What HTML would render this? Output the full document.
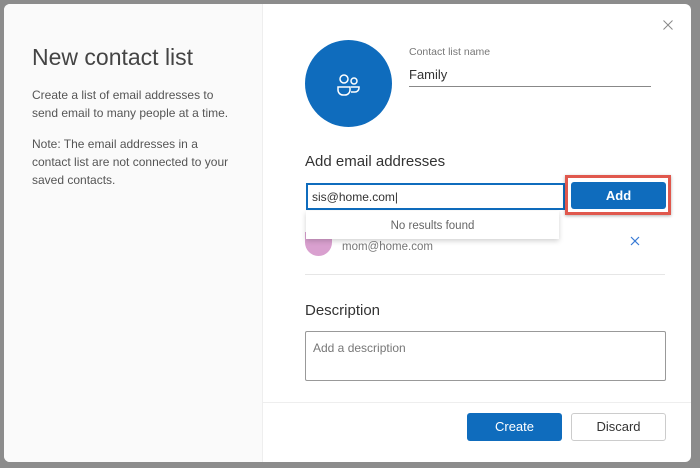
<!DOCTYPE html>
<html><head><style>
*{margin:0;padding:0;box-sizing:border-box}
body{width:700px;height:468px;background:#8c8c8c;font-family:"Liberation Sans",sans-serif;position:relative;overflow:hidden}
.dlg{position:absolute;left:4px;top:4px;width:687px;height:458px;background:#fff;border-radius:6px;overflow:hidden}
.left{position:absolute;left:0;top:0;width:259px;height:100%;background:#fafafa;border-right:1px solid #eee}
.a{position:absolute}
</style></head><body>
<div class="dlg">
<div class="left">
<div class="a" style="left:28px;top:40px;font-size:23px;color:#444;font-weight:300">New contact list</div>
<div class="a" style="left:28px;top:82px;font-size:12px;line-height:18px;color:#555;width:205px">Create a list of email addresses to<br>send email to many people at a time.</div>
<div class="a" style="left:28px;top:131px;font-size:12px;line-height:18px;color:#555;width:215px">Note: The email addresses in a<br>contact list are not connected to your<br>saved contacts.</div>
</div>
<svg class="a" style="left:659px;top:16px" width="10" height="10"><path d="M0.5 0.5L9.5 9.5M9.5 0.5L0.5 9.5" stroke="#888" stroke-width="1"/></svg>
<div class="a" style="left:301px;top:36px;width:87px;height:87px;border-radius:50%;background:#0f6cbd"></div>
<svg class="a" style="left:333px;top:70px" width="24" height="22" viewBox="0 0 24 22"><g fill="none" stroke="#fff" stroke-width="1.5"><circle cx="7" cy="5" r="4"/><circle cx="17" cy="7" r="3"/><path d="M1 13h12v3a5 5 0 0 1-5 5H6a5 5 0 0 1-5-5z"/><path d="M14 13h8v1a4 4 0 0 1-4 4h-4"/></g></svg>
<div class="a" style="left:405px;top:42px;font-size:10.5px;color:#777">Contact list name</div>
<div class="a" style="left:405px;top:63px;font-size:13px;color:#333">Family</div>
<div class="a" style="left:405px;top:82px;width:242px;border-top:1px solid #888"></div>
<div class="a" style="left:301px;top:149px;font-size:15px;color:#333">Add email addresses</div>
<div class="a" style="left:302px;top:179px;width:259px;height:27px;border:2px solid #0f6cbd;font-size:12px;color:#333;padding:5px 4px">sis@home.com|</div>
<div class="a" style="left:561px;top:171px;width:106px;height:40px;border:3px solid #e0584d;box-shadow:0 1px 3px rgba(0,0,0,.3)"></div>
<div class="a" style="left:567px;top:178px;width:95px;height:27px;background:#0f6cbd;border-radius:3px;color:#fff;font-size:13px;font-weight:bold;text-align:center;line-height:27px">Add</div>
<div class="a" style="left:301px;top:228px;width:27px;height:24px;border-radius:0 0 14px 14px;background:#d9a0cf"></div>
<div class="a" style="left:338px;top:237px;font-size:11.5px;color:#777">mom@home.com</div>
<svg class="a" style="left:626px;top:232px" width="10" height="10"><path d="M1 1L9 9M9 1L1 9" stroke="#3a7bd5" stroke-width="1.2"/></svg>
<div class="a" style="left:302px;top:207px;width:253px;height:28px;background:#fff;box-shadow:0 2px 5px rgba(0,0,0,.18);font-size:11.5px;color:#666;text-align:center;line-height:30px">No results found</div>
<div class="a" style="left:301px;top:270px;width:360px;border-top:1px solid #e6e6e6"></div>
<div class="a" style="left:301px;top:298px;font-size:15px;color:#333">Description</div>
<div class="a" style="left:301px;top:327px;width:361px;height:50px;border:1px solid #999;border-radius:2px;font-size:12px;color:#777;padding:9px 7px">Add a description</div>
<div class="a" style="left:259px;top:398px;width:428px;border-top:1px solid #eee"></div>
<div class="a" style="left:463px;top:409px;width:95px;height:28px;background:#0f6cbd;border-radius:3px;color:#fff;font-size:13px;text-align:center;line-height:28px">Create</div>
<div class="a" style="left:567px;top:409px;width:95px;height:28px;border:1px solid #ccc;border-radius:3px;color:#333;font-size:13px;text-align:center;line-height:26px">Discard</div>
</div>
</body></html>
